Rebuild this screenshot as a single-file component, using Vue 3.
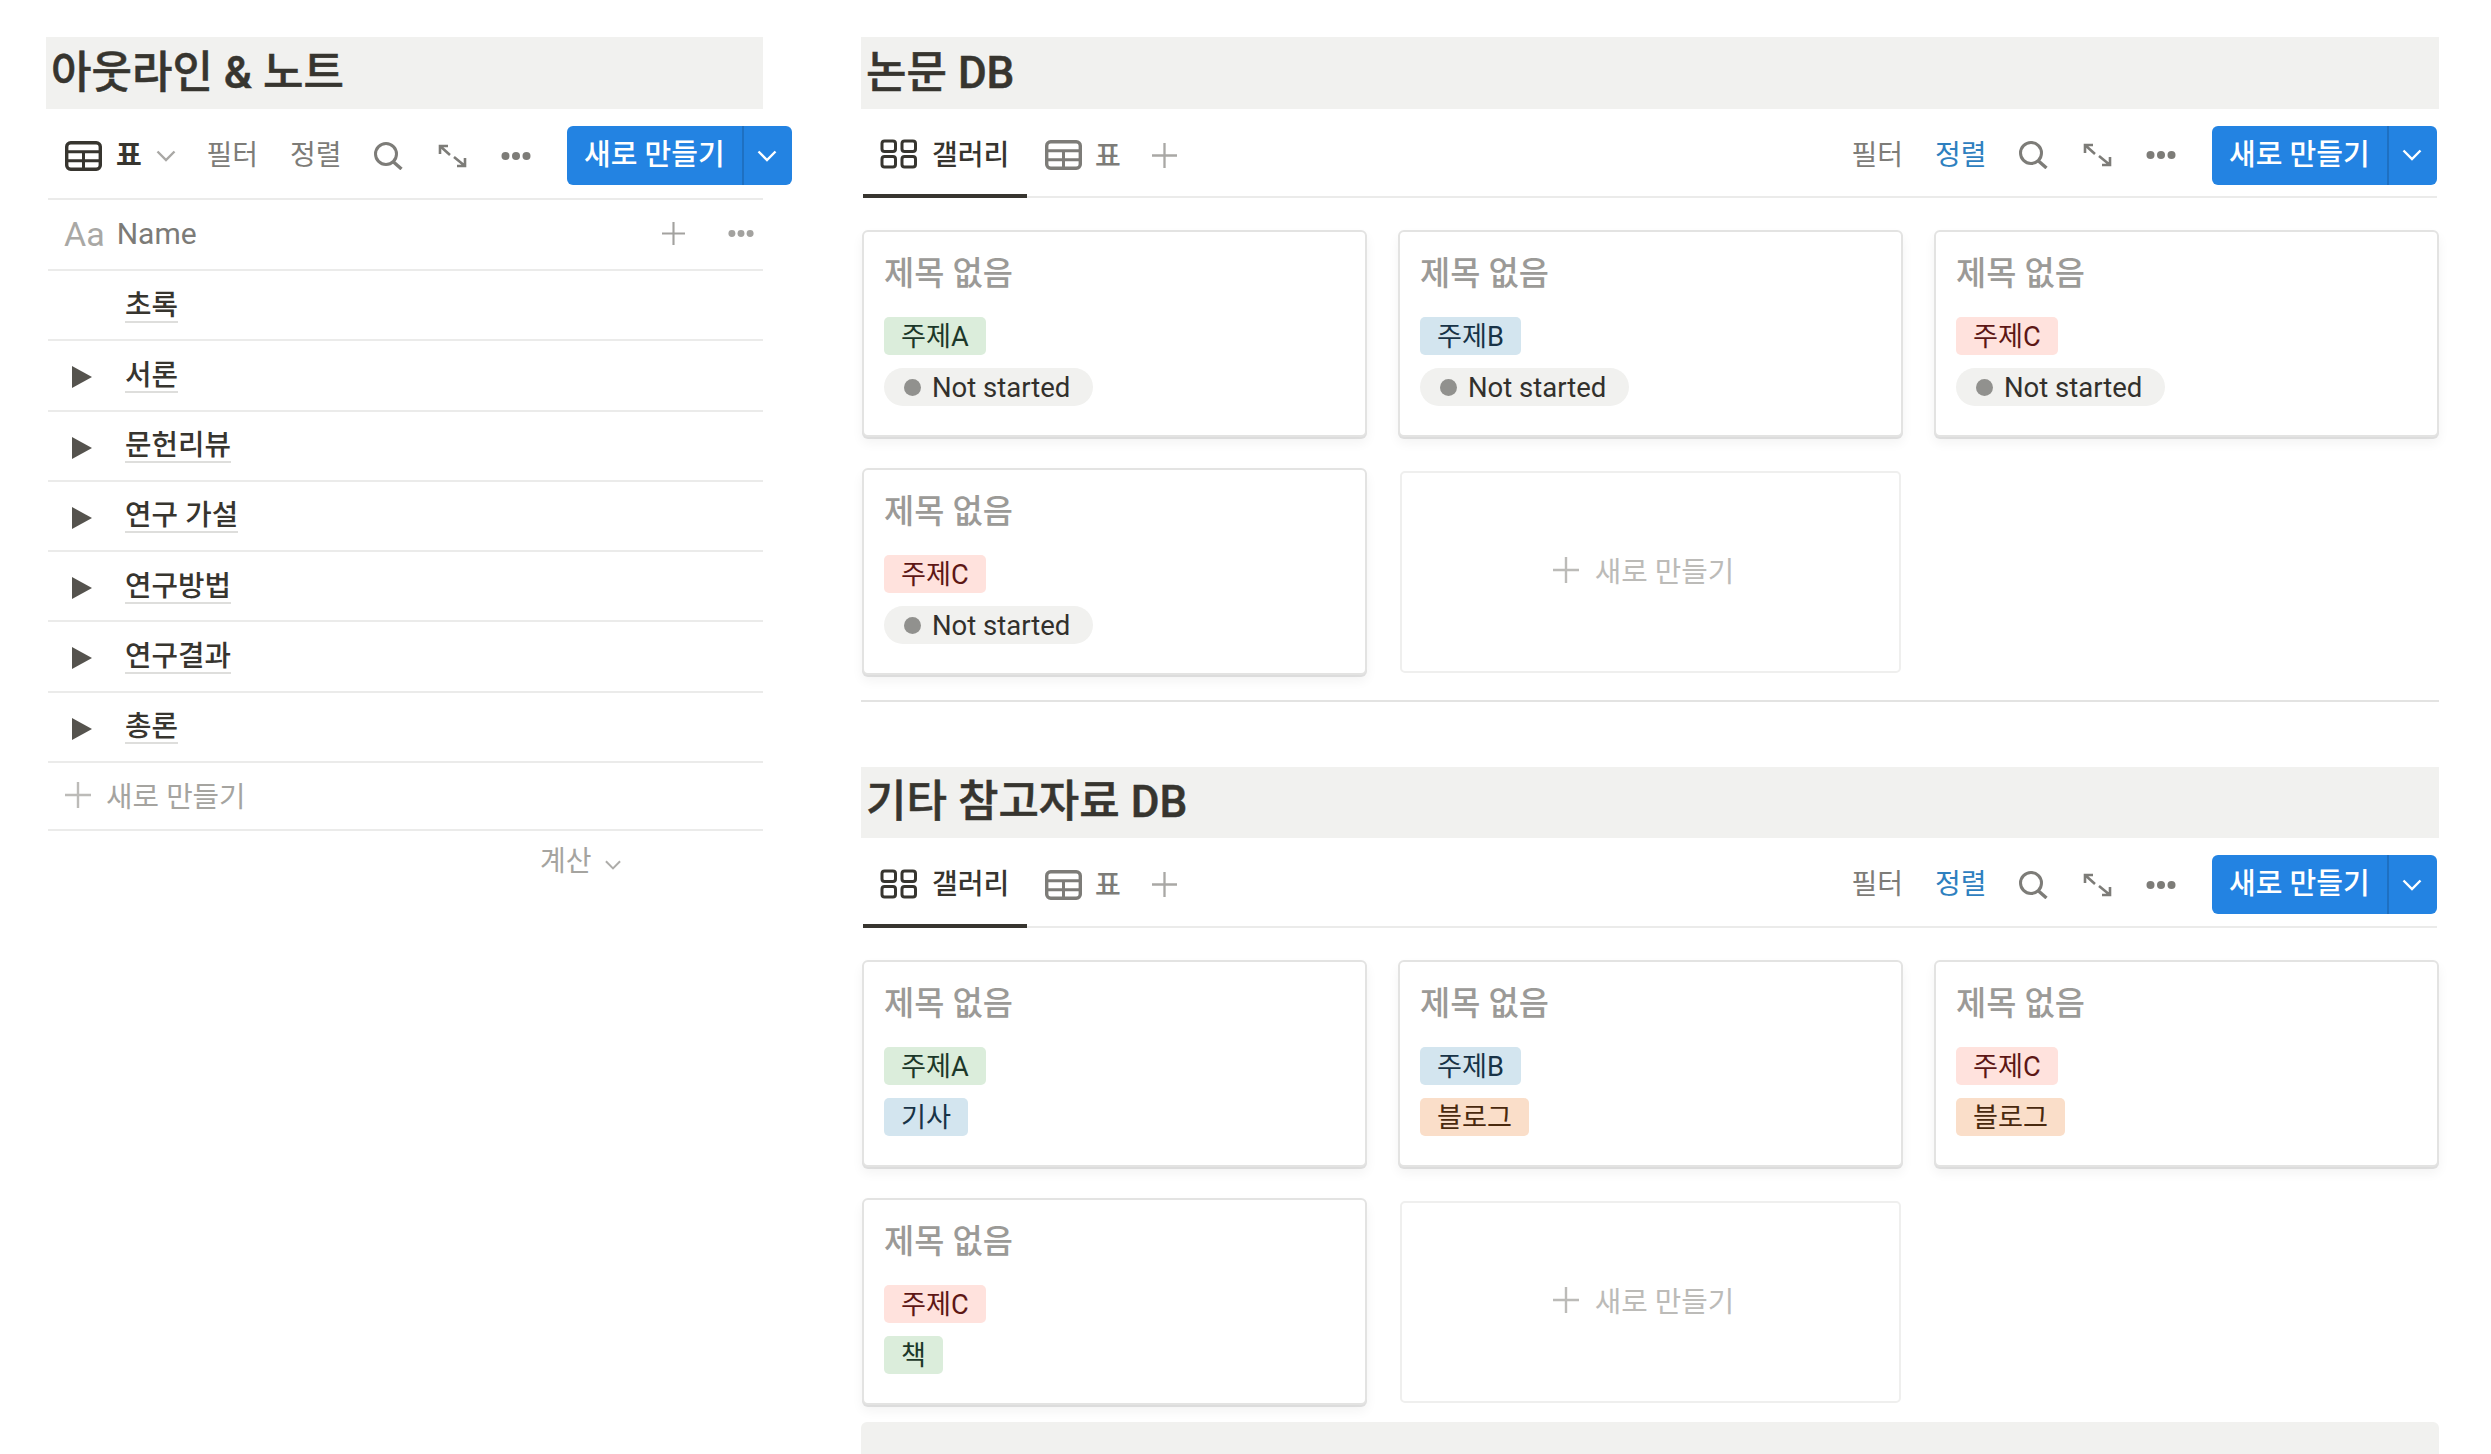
<script setup>
const rows = [
  { name: '초록', toggle: false },
  { name: '서론', toggle: true },
  { name: '문헌리뷰', toggle: true },
  { name: '연구 가설', toggle: true },
  { name: '연구방법', toggle: true },
  { name: '연구결과', toggle: true },
  { name: '총론', toggle: true },
]

const status = { label: 'Not started', kind: 'status' }
const sections = [
  {
    title: '논문 DB',
    cards: [
      { tags: [{ label: '주제A', kind: 'green' }, status] },
      { tags: [{ label: '주제B', kind: 'blue' }, status] },
      { tags: [{ label: '주제C', kind: 'red' }, status] },
      { tags: [{ label: '주제C', kind: 'red' }, status] },
    ],
  },
  {
    title: '기타 참고자료 DB',
    cards: [
      { tags: [{ label: '주제A', kind: 'green' }, { label: '기사', kind: 'blue' }] },
      { tags: [{ label: '주제B', kind: 'blue' }, { label: '블로그', kind: 'orange' }] },
      { tags: [{ label: '주제C', kind: 'red' }, { label: '블로그', kind: 'orange' }] },
      { tags: [{ label: '주제C', kind: 'red' }, { label: '책', kind: 'green' }] },
    ],
  },
]
</script>

<template>
  <div class="page">
    <svg class="defs" aria-hidden="true">
      <symbol id="i-table" viewBox="0 0 37 30">
        <rect x="1.7" y="1.7" width="33.6" height="26.6" rx="4" fill="none" stroke="currentColor" stroke-width="3.4" />
        <path d="M2 10.8H35M2 19.8H35M18.5 10V28" fill="none" stroke="currentColor" stroke-width="3" />
      </symbol>
      <symbol id="i-gallery" viewBox="0 0 37 29">
        <rect x="2" y="1.5" width="13.5" height="10.5" rx="2.6" fill="none" stroke="currentColor" stroke-width="3" />
        <rect x="22" y="1.5" width="13.5" height="10.5" rx="2.6" fill="none" stroke="currentColor" stroke-width="3" />
        <rect x="2" y="17" width="13.5" height="10.5" rx="2.6" fill="none" stroke="currentColor" stroke-width="3" />
        <rect x="22" y="17" width="13.5" height="10.5" rx="2.6" fill="none" stroke="currentColor" stroke-width="3" />
      </symbol>
      <symbol id="i-search" viewBox="0 0 32 28">
        <circle cx="13" cy="12" r="10.5" fill="none" stroke="currentColor" stroke-width="3" />
        <path d="M20.5 20L28.5 27" fill="none" stroke="currentColor" stroke-width="3.4" />
      </symbol>
      <symbol id="i-expand" viewBox="0 0 30 26">
        <path d="M2 11V3H10M2 3L12 12M27 15V23H19M27 23L16 14" fill="none" stroke="currentColor" stroke-width="2.6" />
      </symbol>
      <symbol id="i-dots" viewBox="0 0 30 10">
        <circle cx="4.5" cy="5" r="4" fill="currentColor" />
        <circle cx="15" cy="5" r="4" fill="currentColor" />
        <circle cx="25.5" cy="5" r="4" fill="currentColor" />
      </symbol>
      <symbol id="i-plus" viewBox="0 0 26 26">
        <path d="M13 0V26M0 13H26" fill="none" stroke="currentColor" stroke-width="2.4" />
      </symbol>
      <symbol id="i-chevron" viewBox="0 0 20 12">
        <path d="M1.5 1.5L10 10L18.5 1.5" fill="none" stroke="currentColor" stroke-width="2.4" />
      </symbol>
    </svg>

    <aside class="outline">
      <h2 class="heading">아웃라인 &amp; 노트</h2>

      <div class="bar outline-bar">
        <div class="view-select">
          <svg class="ic-view"><use href="#i-table" /></svg>
          <span class="view-name">표</span>
          <svg class="ic-chev"><use href="#i-chevron" /></svg>
        </div>
        <div class="tools">
          <span class="tool">필터</span>
          <span class="tool">정렬</span>
          <svg class="ic-search"><use href="#i-search" /></svg>
          <svg class="ic-expand"><use href="#i-expand" /></svg>
          <svg class="ic-dots"><use href="#i-dots" /></svg>
          <div class="new-btn">
            <span class="new-main">새로 만들기</span>
            <span class="new-arrow"><svg class="ic-chev-w"><use href="#i-chevron" /></svg></span>
          </div>
        </div>
      </div>

      <div class="table">
        <div class="row head-row">
          <span class="aa">Aa</span>
          <span class="col-name">Name</span>
          <svg class="ic-head-plus"><use href="#i-plus" /></svg>
          <svg class="ic-head-dots"><use href="#i-dots" /></svg>
        </div>
        <div v-for="row in rows" :key="row.name" class="row body-row">
          <svg v-if="row.toggle" class="tri" viewBox="0 0 20 22"><polygon points="0,0 20,11 0,22" /></svg>
          <span v-else class="tri"></span>
          <span class="row-name">{{ row.name }}</span>
        </div>
        <div class="row add-row">
          <svg class="ic-add"><use href="#i-plus" /></svg>
          <span>새로 만들기</span>
        </div>
        <div class="calc">
          <span>계산</span>
          <svg class="ic-calc"><use href="#i-chevron" /></svg>
        </div>
      </div>
    </aside>

    <main class="dbs">
      <section v-for="(section, i) in sections" :key="section.title" class="db">
        <h2 class="heading db-heading">{{ section.title }}</h2>

        <div class="bar tab-bar">
          <div class="tabs">
            <div class="tab active">
              <svg class="ic-view"><use href="#i-gallery" /></svg>
              <span class="tab-label">갤러리</span>
            </div>
            <div class="tab other">
              <svg class="ic-view"><use href="#i-table" /></svg>
              <span class="tab-label">표</span>
            </div>
            <svg class="ic-tab-plus"><use href="#i-plus" /></svg>
          </div>
          <div class="tools">
            <span class="tool">필터</span>
            <span class="tool sort-on">정렬</span>
            <svg class="ic-search"><use href="#i-search" /></svg>
            <svg class="ic-expand"><use href="#i-expand" /></svg>
            <svg class="ic-dots"><use href="#i-dots" /></svg>
            <div class="new-btn">
              <span class="new-main">새로 만들기</span>
              <span class="new-arrow"><svg class="ic-chev-w"><use href="#i-chevron" /></svg></span>
            </div>
          </div>
        </div>

        <div class="grid">
          <article v-for="(card, c) in section.cards" :key="c" class="card">
            <div class="card-title">제목 없음</div>
            <template v-for="tag in card.tags" :key="tag.label">
              <div v-if="tag.kind === 'status'" class="status">
                <i class="dot"></i>{{ tag.label }}
              </div>
              <div v-else class="tag" :class="tag.kind">{{ tag.label }}</div>
            </template>
          </article>
          <div class="new-card">
            <svg class="ic-add"><use href="#i-plus" /></svg>
            <span>새로 만들기</span>
          </div>
        </div>

        <div v-if="i === 0" class="divider"></div>
      </section>
      <div class="next-heading"></div>
    </main>
  </div>
</template>

<style>
html, body { margin: 0; background: #fff; overflow: hidden; }
</style>

<style scoped>
.page {
  display: flex;
  gap: 98px;
  height: 1454px;
  box-sizing: border-box;
  padding: 37px 0 0 46px;
  overflow: hidden;
  background: #fff;
  color: #37352f;
  font-family: Roboto, "Noto Sans CJK KR", sans-serif;
}
.defs { position: absolute; width: 0; height: 0; }
svg { display: block; flex: none; overflow: visible; }

.outline { width: 717px; flex: none; }
.dbs { width: 1578px; flex: none; }

.heading {
  margin: 0;
  height: 72px;
  padding-left: 5px;
  background: #f1f1ef;
  font-size: 44px;
  font-weight: 500;
  line-height: 72px;
  color: #37352f;
  white-space: nowrap;
  -webkit-text-stroke: 0.5px #37352f;
}
.db + .db .heading { height: 71px; line-height: 70px; }

.bar { display: flex; align-items: center; justify-content: space-between; box-sizing: border-box; }
.outline-bar { height: 89px; padding: 4px 0 0 19px; margin-right: -29px; }
.tab-bar {
  height: 89px;
  margin: 0 2px;
  padding-top: 5px;
  border-bottom: 2px solid #ebebea;
}
.db + .db .tab-bar { height: 90px; }

.view-select { display: flex; align-items: center; color: #37352f; }
.view-name { margin-left: 14px; font-size: 28px; font-weight: 700; line-height: 32px; }
.ic-view { width: 37px; height: 30px; }
.ic-chev { width: 20px; height: 12px; margin-left: 14px; color: #a9a8a5; }

.tools { display: flex; align-items: center; gap: 33px; color: #7d7c78; }
.tool { font-size: 28px; line-height: 33px; }
.tool + .tool { margin: 0 -1.5px 0 -1px; }
.sort-on { color: #2e80bf; }
.ic-search { width: 32px; height: 28px; }
.ic-expand { width: 30px; height: 26px; }
.ic-dots { width: 30px; height: 10px; }

.new-btn {
  display: flex;
  align-items: stretch;
  width: 225px;
  height: 59px;
  margin-left: 3px;
  border-radius: 6px;
  background: #2383e2;
  color: #fff;
}
.new-main {
  width: 175px;
  box-sizing: border-box;
  padding-left: 17px;
  font-size: 29px;
  font-weight: 500;
  line-height: 59px;
  white-space: nowrap;
}
.new-arrow {
  flex: 1;
  display: flex;
  align-items: center;
  justify-content: center;
  padding-right: 3px;
  border-left: 2px solid #1e70c2;
}
.ic-chev-w { width: 20px; height: 12px; color: #fff; }

.table { margin-left: 2px; border-top: 2px solid #ebebea; }
.row { display: flex; align-items: center; box-sizing: border-box; border-bottom: 2px solid #ebebea; }
.head-row { height: 71px; padding: 0 9px 2px 16px; }
.aa { font-size: 34px; line-height: 40px; color: #a9a8a5; }
.col-name { margin-left: 12px; font-size: 30px; line-height: 40px; color: #7c7b77; flex: 1; }
.ic-head-plus { width: 23px; height: 23px; color: #a3a29f; }
.ic-head-dots { width: 26px; height: 9px; margin-left: 43px; color: #a3a29f; }

.body-row { height: 70.25px; padding: 1px 0 0 24px; }
.tri { width: 20px; height: 22px; margin: 3px 33px 0 0; fill: #55534e; flex: none; }
.row-name {
  font-size: 28.8px;
  font-weight: 500;
  line-height: 32px;
  color: #37352f;
  border-bottom: 2px solid #dededc;
}
.add-row { height: 68px; padding: 0 0 2px 17px; gap: 15px; font-size: 28.8px; color: #a5a4a0; }
.ic-add { width: 26px; height: 26px; color: #bcbbb8; }
.calc {
  display: flex;
  align-items: center;
  padding: 15px 0 0 492px;
  font-size: 28px;
  line-height: 32px;
  color: #a5a4a0;
}
.ic-calc { width: 18px; height: 10px; margin: 6px 0 0 12px; color: #aeadaa; }

.tabs { display: flex; align-items: center; align-self: stretch; }
.tab { display: flex; align-items: center; font-size: 28px; line-height: 32px; align-self: stretch; margin-top: -5px; padding-top: 5px; }
.tab-label { padding-top: 3px; }
.tab.active {
  width: 164px;
  box-sizing: border-box;
  padding-left: 17px;
  gap: 15px;
  font-weight: 500;
  color: #37352f;
  margin-bottom: -2px;
  border-bottom: 4px solid #37352f;
}
.tab.other { margin-left: 18px; gap: 13px; color: #7d7c78; font-weight: 500; }
.ic-tab-plus { width: 25px; height: 25px; margin-left: 31px; color: #a9a8a5; }

.grid {
  display: grid;
  grid-template-columns: repeat(3, 505px);
  grid-auto-rows: 207px;
  gap: 31px;
  margin-top: 32px;
  padding-left: 1px;
}
.card {
  box-sizing: border-box;
  padding: 20px 20px 0;
  border: 2px solid #e3e3e2;
  border-radius: 6px;
  background: #fff;
  box-shadow: 0 2px 0 rgba(0, 0, 0, 0.1), 0 6px 12px rgba(15, 15, 15, 0.05);
}
.card-title {
  margin-bottom: 21px;
  font-size: 32.8px;
  font-weight: 500;
  line-height: 44px;
  color: #9b9a97;
}
.tag {
  width: fit-content;
  height: 38px;
  margin-bottom: 13px;
  padding: 0 17px;
  border-radius: 5px;
  font-size: 27.2px;
  line-height: 41px;
}
.green { background: #dbeddb; color: #1c3829; }
.blue { background: #d3e5ef; color: #183347; }
.red { background: #ffe2dd; color: #5d1715; }
.orange { background: #fadec9; color: #49290e; }
.status {
  display: flex;
  align-items: center;
  width: fit-content;
  height: 38px;
  padding: 0 23px 0 20px;
  border-radius: 19px;
  background: #f1f1ef;
  color: #32302c;
  font-size: 27.5px;
}
.dot { width: 17px; height: 17px; margin-right: 11px; border-radius: 50%; background: #91918e; }

.new-card {
  display: flex;
  align-items: center;
  justify-content: center;
  gap: 16px;
  margin: 3px 2px 2px 2px;
  padding: 0 14px 5px 0;
  border: 2px solid #efefee;
  border-radius: 5px;
  font-size: 28.8px;
  color: #bcbbb8;
}

.divider { margin-top: 25px; height: 2px; background: #e3e3e2; }
.db + .db { margin-top: 65px; }
.next-heading {
  margin-top: 17px;
  height: 40px;
  border-radius: 6px 6px 0 0;
  background: #f1f1ef;
}
</style>
